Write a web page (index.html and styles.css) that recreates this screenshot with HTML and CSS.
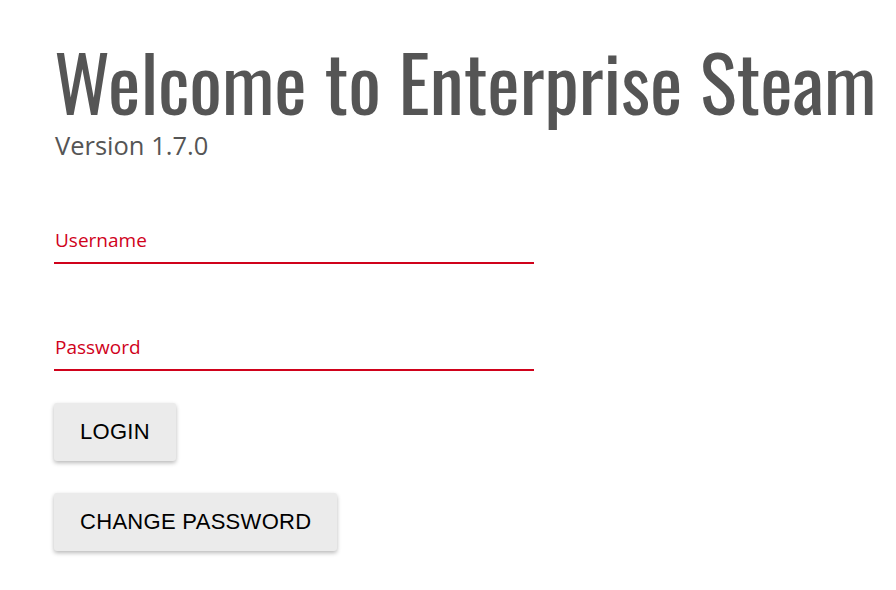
FILE: index.html
```
<!DOCTYPE html>
<html lang="en">
<head>
    <meta charset="UTF-8">
    <meta name="viewport" content="width=device-width, initial-scale=1.0">
    <title>Enterprise Steam</title>
    <link rel="stylesheet" href="styles.css">
</head>
<body>
    <div class="login-page">
        <h1 class="title">Welcome to Enterprise Steam</h1>
        <p class="version">Version 1.7.0</p>
        <form class="login-form">
            <div class="field">
                <label for="username">Username</label>
                <input type="text" id="username" name="username">
            </div>
            <div class="field">
                <label for="password">Password</label>
                <input type="password" id="password" name="password">
            </div>
            <div class="actions">
                <button type="submit" class="btn">LOGIN</button>
                <button type="button" class="btn">CHANGE PASSWORD</button>
            </div>
        </form>
    </div>
</body>
</html>
```

FILE: styles.css
```
body {
    margin: 0;
    font-family: "Open Sans", sans-serif;
    background: #fff;
}
.login-page {
    padding: 38px 0 30px 54px;
}
.title {
    margin: 0;
    font-family: "Oswald", "DejaVu Sans Condensed", sans-serif;
    font-weight: 400;
    font-size: 77px;
    line-height: 84px;
    color: #555;
    white-space: nowrap;
}
.version {
    margin: 6px 0 0 1px;
    font-size: 25.5px;
    line-height: 34px;
    color: #555;
}
.login-form {
    margin-top: 65px;
    width: 480px;
}
.field {
    display: flex;
    flex-direction: column;
    margin-bottom: 70px;
}
.field label {
    font-size: 19px;
    color: #d0021b;
    padding-left: 1px;
}
.field input {
    border: none;
    border-bottom: 2px solid #d0021b;
    outline: none;
    height: 9px;
    padding: 0;
}
.actions {
    display: flex;
    flex-direction: column;
    align-items: flex-start;
    gap: 32px;
    margin-top: -38px;
}
.btn {
    font-family: "Liberation Sans", Arial, sans-serif;
    font-size: 22px;
    letter-spacing: 0.3px;
    padding: 0 26px;
    height: 58px;
    background: #ebebeb;
    color: #000;
    border: none;
    border-radius: 3px;
    box-shadow: 0 2px 4px rgba(0, 0, 0, 0.28);
    cursor: pointer;
}
```
